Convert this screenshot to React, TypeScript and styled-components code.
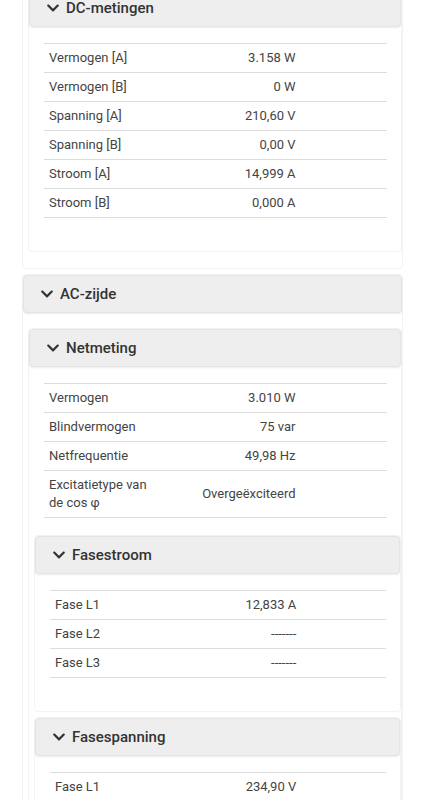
import React from 'react';
import styled, { createGlobalStyle } from 'styled-components';
import { FaChevronDown } from 'react-icons/fa';

type Row = [string, string];

const GlobalStyle = createGlobalStyle`
  html, body {
    margin: 0;
    padding: 0;
    background: #ffffff;
  }
  body {
    font-family: Roboto, 'Liberation Sans', Arial, sans-serif;
    color: #444444;
  }
`;

// the page is shown scrolled: the DC-zijde header sits above the window
const Page = styled.div`
  margin-top: -66px;
  padding: 0 20px 40px 22px;
`;

const Panel = styled.section`
  border: 1px solid #f3f3f3;
  border-radius: 4px;
  margin-bottom: 5px;
  background: #ffffff;

  &:last-child {
    margin-bottom: 0;
  }
`;

const Header = styled.div`
  display: flex;
  align-items: center;
  box-sizing: border-box;
  height: 38px;
  padding-left: 16px;
  background: #eeeeee;
  border: 1px solid #e4e4e4;
  border-radius: 4px;
  box-shadow: 0 1px 2px rgba(0, 0, 0, 0.08);
  color: #333333;
  font-size: 15px;
  font-weight: 500;
  cursor: pointer;

  svg {
    margin-right: 6px;
    flex-shrink: 0;
  }
`;

const Body = styled.div`
  padding: 15px 0 16px 5px;
`;

const Table = styled.table`
  width: calc(100% - 24px);
  margin: 1px 14px 17px 10px;
  border-collapse: collapse;
  table-layout: fixed;
  border-top: 1px solid #dddddd;
  font-size: 13px;
  line-height: 18px;
  color: #444444;
`;

const Tr = styled.tr`
  border-bottom: 1px solid #dddddd;
`;

const Label = styled.td`
  width: 33%;
  padding: 5px;
  text-align: left;
  vertical-align: middle;
`;

const Value = styled.td`
  width: 42.5%;
  padding: 5px;
  text-align: right;
  vertical-align: middle;
  white-space: nowrap;
`;

const Unit = styled.td`
  width: 24.5%;
  padding: 5px;
`;

const Values: React.FC<{ rows: Row[] }> = ({ rows }) => (
  <Table>
    <tbody>
      {rows.map(([label, value]) => (
        <Tr key={label}>
          <Label>{label}</Label>
          <Value>{value}</Value>
          <Unit />
        </Tr>
      ))}
    </tbody>
  </Table>
);

const Section: React.FC<{ title: string; children?: React.ReactNode }> = ({
  title,
  children,
}) => (
  <Panel>
    <Header>
      <FaChevronDown size={14} />
      {title}
    </Header>
    <Body>{children}</Body>
  </Panel>
);

const dcRows: Row[] = [
  ['Vermogen [A]', '3.158 W'],
  ['Vermogen [B]', '0 W'],
  ['Spanning [A]', '210,60 V'],
  ['Spanning [B]', '0,00 V'],
  ['Stroom [A]', '14,999 A'],
  ['Stroom [B]', '0,000 A'],
];

const netRows: Row[] = [
  ['Vermogen', '3.010 W'],
  ['Blindvermogen', '75 var'],
  ['Netfrequentie', '49,98 Hz'],
  ['Excitatietype van de cos φ', 'Overgeëxciteerd'],
];

const stroomRows: Row[] = [
  ['Fase L1', '12,833 A'],
  ['Fase L2', '-------'],
  ['Fase L3', '-------'],
];

const spanningRows: Row[] = [
  ['Fase L1', '234,90 V'],
  ['Fase L2', '-------'],
  ['Fase L3', '-------'],
];

const App: React.FC = () => {
  return (
    <>
      <GlobalStyle />
      <Page>
        <Section title="DC-zijde">
          <Section title="DC-metingen">
            <Values rows={dcRows} />
          </Section>
        </Section>
        <Section title="AC-zijde">
          <Section title="Netmeting">
            <Values rows={netRows} />
            <Section title="Fasestroom">
              <Values rows={stroomRows} />
            </Section>
            <Section title="Fasespanning">
              <Values rows={spanningRows} />
            </Section>
          </Section>
        </Section>
      </Page>
    </>
  );
};

export default App;
